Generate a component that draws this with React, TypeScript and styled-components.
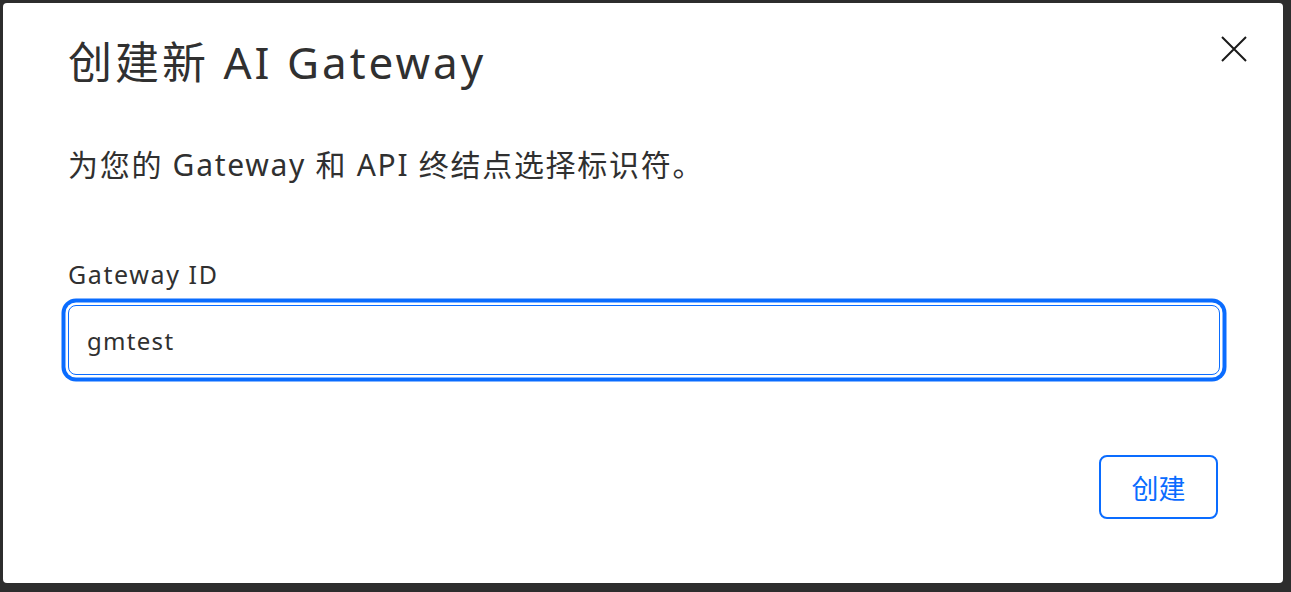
import React from "react";
import styled, { createGlobalStyle } from "styled-components";

const GlobalStyle = createGlobalStyle`
  html, body {
    margin: 0;
    padding: 0;
    background: #2d2d2d;
  }
  body {
    font-family: "Noto Sans", "Noto Sans CJK SC", sans-serif;
    color: #303030;
  }
  * { box-sizing: border-box; }
`;

const Backdrop = styled.div`
  width: 1291px;
  height: 592px;
  padding: 3px 8px 9px 3px;
  background: #2d2d2d;
`;

const Dialog = styled.div`
  width: 1280px;
  height: 580px;
  background: #ffffff;
  border-radius: 4px;
  padding: 33px 63px 64px 65px;
  display: flex;
  flex-direction: column;
`;

const Header = styled.div`
  display: flex;
  align-items: flex-start;
  justify-content: space-between;
`;

const Title = styled.h1`
  margin: 0;
  font-size: 44px;
  line-height: 52px;
  font-weight: 400;
  letter-spacing: 3px;
  color: #303030;
`;

const CloseButton = styled.button`
  border: none;
  background: transparent;
  padding: 0;
  margin: -3px -30px 0 0;
  width: 32px;
  height: 32px;
  display: flex;
  align-items: center;
  justify-content: center;
  cursor: pointer;
`;

const Description = styled.p`
  margin: 57px 0 0;
  font-size: 30px;
  line-height: 40px;
  letter-spacing: 1.7px;
  color: #303030;
`;

const Label = styled.label`
  margin-top: 73px;
  font-size: 25px;
  line-height: 32px;
  letter-spacing: 1.6px;
  color: #303030;
`;

const Input = styled.input`
  margin-top: 15px;
  height: 70px;
  width: 100%;
  border: 1.5px solid #0a6cff;
  border-radius: 8px;
  padding: 0 18px;
  font-family: inherit;
  font-size: 24px;
  letter-spacing: 1.3px;
  color: #303030;
  outline: none;
  box-shadow: 0 0 0 2.5px #ffffff, 0 0 0 6.5px #0a6cff;
`;

const Footer = styled.div`
  margin-top: auto;
  display: flex;
  justify-content: flex-end;
  padding-right: 2px;
`;

const PrimaryButton = styled.button`
  width: 119px;
  height: 64px;
  border: 2px solid #0a6cff;
  border-radius: 8px;
  background: #ffffff;
  color: #0a6cff;
  font-family: inherit;
  font-size: 27px;
  cursor: pointer;
`;

export default function App() {
  return (
    <>
      <GlobalStyle />
      <Backdrop>
        <Dialog>
          <Header>
            <Title>创建新 AI Gateway</Title>
            <CloseButton aria-label="关闭">
              <svg width="26" height="26" viewBox="0 0 26 26">
                <path d="M1 1 L25 25 M25 1 L1 25" stroke="#1a1a1a" strokeWidth="2" fill="none" />
              </svg>
            </CloseButton>
          </Header>
          <Description>为您的 Gateway 和 API 终结点选择标识符。</Description>
          <Label htmlFor="gw">Gateway ID</Label>
          <Input id="gw" defaultValue="gmtest" />
          <Footer>
            <PrimaryButton>创建</PrimaryButton>
          </Footer>
        </Dialog>
      </Backdrop>
    </>
  );
}
